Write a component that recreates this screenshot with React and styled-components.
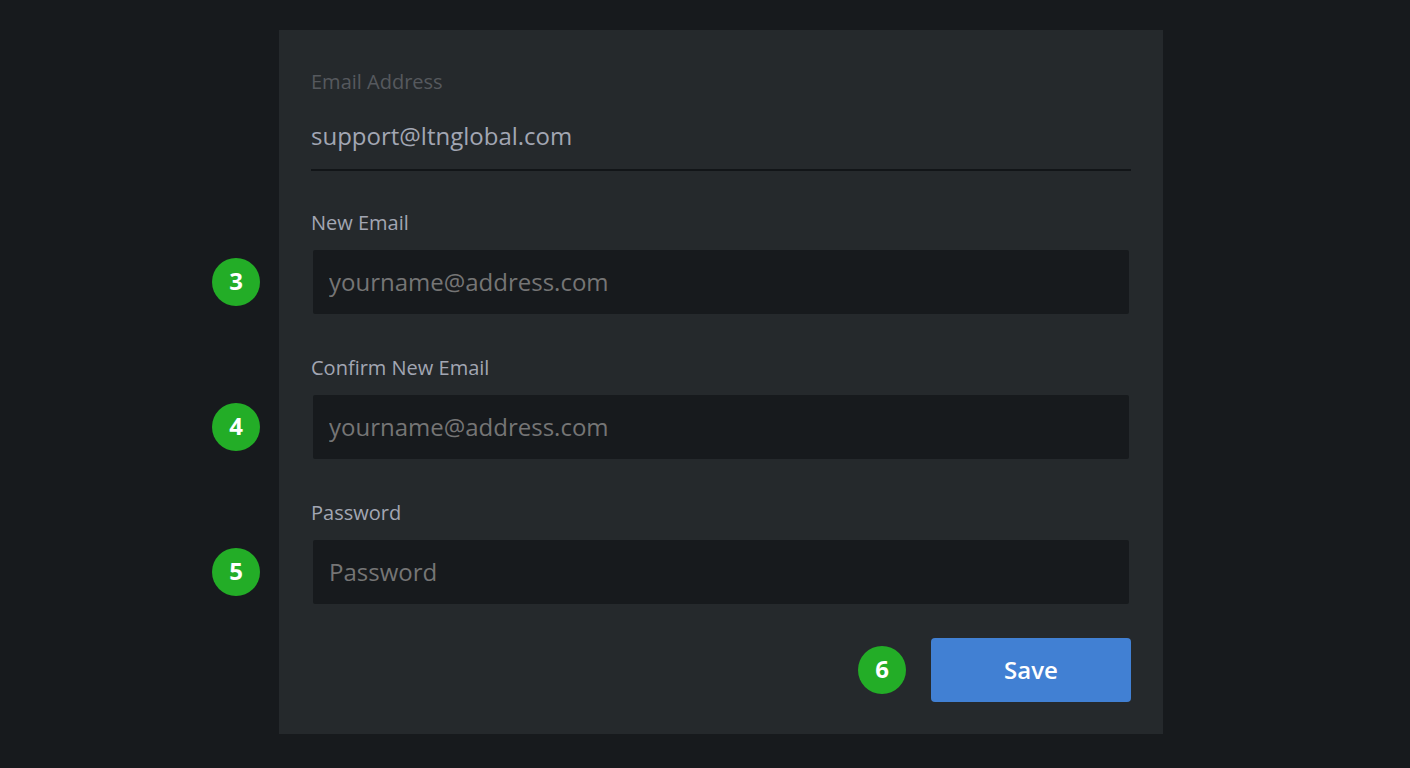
import styled, { createGlobalStyle } from "styled-components";

const GlobalStyle = createGlobalStyle`
  *, *::before, *::after {
    box-sizing: border-box;
  }

  body {
    margin: 0;
    background: #171a1d;
    font-family: "Open Sans", sans-serif;
  }
`;

const Page = styled.main`
  min-height: 100vh;
  padding: 30px 20px 34px 52px;
`;

const Card = styled.form`
  width: 100%;
  max-width: 884px;
  margin: 0 auto;
  padding: 32px;
  background: #25292c;
`;

const Label = styled.label`
  display: block;
  font-size: 20px;
  line-height: 40px;
  color: ${(props) => (props.$muted ? "#56595e" : "#a2a6b3")};
`;

const Field = styled.div`
  position: relative;
  margin-bottom: ${(props) => (props.$readOnly ? "32px" : "34px")};
`;

const CurrentEmail = styled.output`
  display: block;
  border-bottom: 2px solid #121518;
  font-size: 24px;
  line-height: 67px;
  color: #a2a6b3;
`;

const Input = styled.input`
  display: block;
  width: calc(100% - 4px);
  height: 64px;
  margin: 7px 2px 0;
  padding: 0 16px 2px;
  border: none;
  border-radius: 2px;
  background: #171a1d;
  font-family: inherit;
  font-size: 24px;
  color: #a2a6b3;

  &::placeholder {
    color: #757575;
    opacity: 1;
  }
`;

const Step = styled.span`
  display: flex;
  align-items: center;
  justify-content: center;
  flex: none;
  width: 48px;
  height: 48px;
  padding-bottom: 4px;
  border-radius: 50%;
  background: #23ad27;
  font-size: 24px;
  font-weight: 700;
  color: #fff;
`;

const FieldStep = styled(Step)`
  position: absolute;
  bottom: 8px;
  left: -99px;
`;

const Actions = styled.div`
  display: flex;
  align-items: center;
  justify-content: flex-end;
  gap: 25px;
`;

const SaveButton = styled.button`
  width: 200px;
  height: 64px;
  padding: 0 16px 2px;
  border: none;
  border-radius: 4px;
  background: #4180d3;
  font-family: inherit;
  font-size: 24px;
  font-weight: 600;
  color: #fff;
  cursor: pointer;
`;

const fields = [
  { id: "newEmail", label: "New Email", type: "email", placeholder: "yourname@address.com", step: 3 },
  { id: "confirmEmail", label: "Confirm New Email", type: "email", placeholder: "yourname@address.com", step: 4 },
  { id: "password", label: "Password", type: "password", placeholder: "Password", step: 5 },
];

const App = () => {
  return (
    <>
      <GlobalStyle />
      <Page>
        <Card onSubmit={(e) => e.preventDefault()}>
          <Field $readOnly>
            <Label htmlFor="currentEmail" $muted>
              Email Address
            </Label>
            <CurrentEmail id="currentEmail">support@ltnglobal.com</CurrentEmail>
          </Field>
          {fields.map((field) => (
            <Field key={field.id}>
              <Label htmlFor={field.id}>{field.label}</Label>
              <Input id={field.id} name={field.id} type={field.type} placeholder={field.placeholder} />
              <FieldStep>{field.step}</FieldStep>
            </Field>
          ))}
          <Actions>
            <Step>6</Step>
            <SaveButton type="submit">Save</SaveButton>
          </Actions>
        </Card>
      </Page>
    </>
  );
};

export default App;
